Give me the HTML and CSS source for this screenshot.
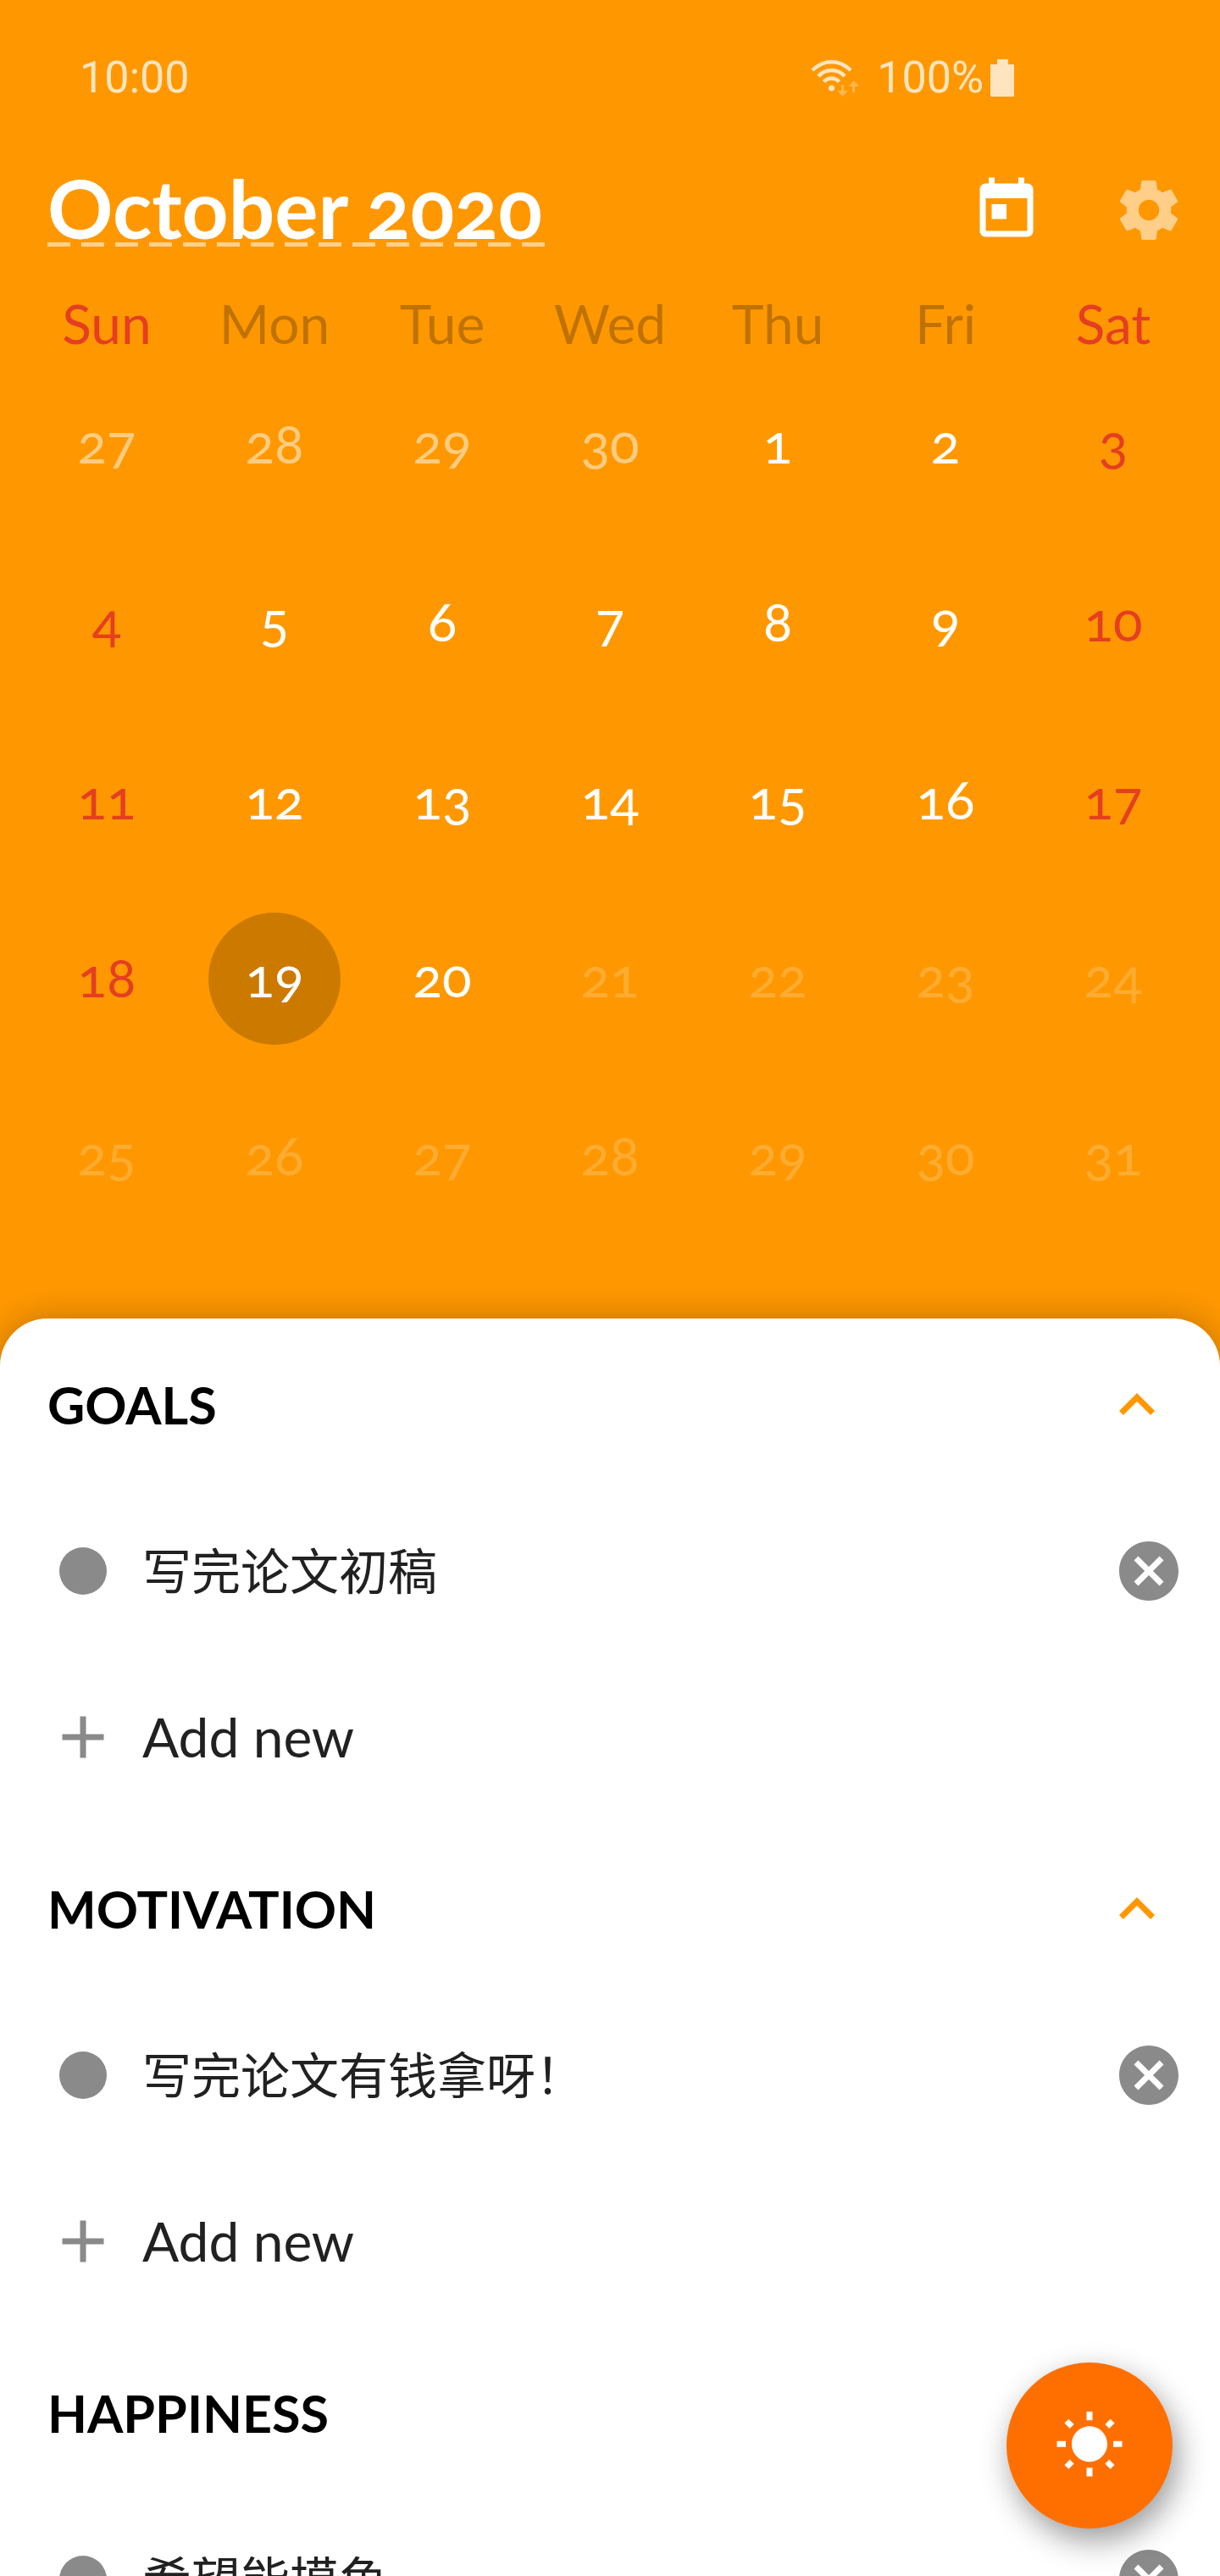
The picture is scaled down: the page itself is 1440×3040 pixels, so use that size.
FILE: index.html
```html
<!DOCTYPE html>
<html lang="en">
<head>
<meta charset="utf-8">
<meta name="viewport" content="width=device-width, initial-scale=1">
<title>October 2020</title>
<link rel="stylesheet" href="styles.css">
</head>
<body>
<svg class="sprite" aria-hidden="true">
  <symbol id="cancel" viewBox="0 0 24 24"><path d="M12 2C6.47 2 2 6.47 2 12s4.47 10 10 10 10-4.47 10-10S17.53 2 12 2zm5 13.59L15.59 17 12 13.41 8.41 17 7 15.59 10.59 12 7 8.41 8.41 7 12 10.59 15.59 7 17 8.41 13.41 12 17 15.59z"/></symbol>
  <symbol id="chevron" viewBox="0 0 24 24"><path d="M12 8l-6 6 1.41 1.41L12 10.83l4.59 4.58L18 14z"/></symbol>
  <symbol id="plus" viewBox="0 0 24 24"><path d="M19 13h-6v6h-2v-6H5v-2h6V5h2v6h6v2z"/></symbol>
  <symbol id="dot" viewBox="0 0 24 24"><circle cx="12" cy="12" r="8"/></symbol>
</svg>
<header class="top">
  <div class="status">
    <span>10:00</span>
    <div class="status-right">
      <svg class="wifi" viewBox="0 0 58 48" aria-hidden="true">
        <g fill="none" stroke="currentColor" stroke-width="4.5">
          <path d="M2 15Q12 5 24.500 5T47 15"/>
          <path d="M9 22Q15 15 24.500 15T40 22"/>
          <path d="M15.500 28.500Q19 24.500 24.500 24.500T33.500 28.500"/>
        </g>
        <circle cx="24.500" cy="36" r="3.500" fill="currentColor"/>
        <path class="traffic" d="M36 32h3v7h5l-6.500 7-6.500-7h5zM49 41h3v-7h5l-6-7-6.500 7h4.500z"/>
      </svg>
      <span>100%</span>
      <svg class="battery" viewBox="0 0 28 44" aria-hidden="true"><path fill="currentColor" d="M8 1q0-1 1-1h11q1 0 1 1v5h6q1 0 1 1v36q0 1-1 1H1q-1 0-1-1V7q0-1 1-1h7z"/></svg>
    </div>
  </div>
  <div class="bar">
    <button class="month">October 2020</button>
    <div class="actions">
      <button class="icon-button" aria-label="Today"><svg class="icon" viewBox="0 0 24 24"><path d="M19 3h-1V1h-2v2H8V1H6v2H5c-1.110 0-1.990.9-1.990 2L3 19c0 1.100.89 2 2 2h14c1.100 0 2-.9 2-2V5c0-1.100-.9-2-2-2zm0 16H5V8h14v11zM7 10h5v5H7z"/></svg></button>
      <button class="icon-button faded" aria-label="Settings"><svg class="icon" viewBox="0 0 24 24"><path d="M19.43 12.98c.04-.32.07-.64.07-.98s-.03-.66-.07-.98l2.110-1.650c.19-.15.24-.42.12-.64l-2-3.460c-.12-.22-.39-.3-.61-.22l-2.490 1c-.52-.4-1.080-.73-1.690-.98l-.38-2.650C14.460 2.180 14.250 2 14 2h-4c-.25 0-.46.18-.49.42l-.38 2.650c-.61.25-1.170.59-1.690.98l-2.490-1c-.23-.09-.49 0-.61.22l-2 3.460c-.13.22-.07.49.12.64l2.110 1.650c-.04.32-.07.65-.07.98s.03.66.07.98l-2.110 1.650c-.19.15-.24.42-.12.64l2 3.460c.12.22.39.3.61.22l2.490-1c.52.4 1.080.73 1.690.98l.38 2.650c.03.24.24.42.49.42h4c.25 0 .46-.18.49-.42l.38-2.650c.61-.25 1.170-.59 1.690-.98l2.490 1c.23.09.49 0 .61-.22l2-3.460c.12-.22.07-.49-.12-.64l-2.110-1.650zM12 15.500c-1.930 0-3.500-1.570-3.500-3.500s1.570-3.500 3.500-3.500 3.500 1.570 3.500 3.500-1.570 3.500-3.500 3.500z"/></svg></button>
    </div>
  </div>
  <div class="calendar">
    <table>
      <thead>
        <tr><th class="weekend">Sun</th><th>Mon</th><th>Tue</th><th>Wed</th><th>Thu</th><th>Fri</th><th class="weekend">Sat</th></tr>
      </thead>
      <tbody>
        <tr><td class="past"><button>27</button></td><td class="past"><button>28</button></td><td class="past"><button>29</button></td><td class="past"><button>30</button></td><td><button>1</button></td><td><button>2</button></td><td class="weekend"><button>3</button></td></tr>
        <tr><td class="weekend"><button>4</button></td><td><button>5</button></td><td><button>6</button></td><td><button>7</button></td><td><button>8</button></td><td><button>9</button></td><td class="weekend"><button>10</button></td></tr>
        <tr><td class="weekend"><button>11</button></td><td><button>12</button></td><td><button>13</button></td><td><button>14</button></td><td><button>15</button></td><td><button>16</button></td><td class="weekend"><button>17</button></td></tr>
        <tr><td class="weekend"><button>18</button></td><td class="selected"><button>19</button></td><td><button>20</button></td><td class="future"><button>21</button></td><td class="future"><button>22</button></td><td class="future"><button>23</button></td><td class="future"><button>24</button></td></tr>
        <tr><td class="future"><button>25</button></td><td class="future"><button>26</button></td><td class="future"><button>27</button></td><td class="future"><button>28</button></td><td class="future"><button>29</button></td><td class="future"><button>30</button></td><td class="future"><button>31</button></td></tr>
      </tbody>
    </table>
  </div>
</header>
<main class="sheet">
  <section>
    <div class="section-head"><h2>GOALS</h2><button class="icon-button accent" aria-label="Collapse goals"><svg class="icon"><use href="#chevron"/></svg></button></div>
    <div class="item"><svg class="icon"><use href="#dot"/></svg><span class="item-text" lang="zh-CN">写完论文初稿</span><button class="icon-button" aria-label="Remove"><svg class="icon"><use href="#cancel"/></svg></button></div>
    <button class="item"><svg class="icon"><use href="#plus"/></svg><span class="item-text">Add new</span></button>
  </section>
  <section>
    <div class="section-head"><h2>MOTIVATION</h2><button class="icon-button accent" aria-label="Collapse motivation"><svg class="icon"><use href="#chevron"/></svg></button></div>
    <div class="item"><svg class="icon"><use href="#dot"/></svg><span class="item-text" lang="zh-CN">写完论文有钱拿呀！</span><button class="icon-button" aria-label="Remove"><svg class="icon"><use href="#cancel"/></svg></button></div>
    <button class="item"><svg class="icon"><use href="#plus"/></svg><span class="item-text">Add new</span></button>
  </section>
  <section>
    <div class="section-head"><h2>HAPPINESS</h2><button class="icon-button accent" aria-label="Collapse happiness"><svg class="icon"><use href="#chevron"/></svg></button></div>
    <div class="item"><svg class="icon"><use href="#dot"/></svg><span class="item-text" lang="zh-CN">希望能摸鱼</span><button class="icon-button" aria-label="Remove"><svg class="icon"><use href="#cancel"/></svg></button></div>
  </section>
</main>
<button class="fab" aria-label="Day theme"><svg class="icon" viewBox="0 0 24 24"><path d="M6.760 4.840l-1.800-1.790-1.410 1.410 1.790 1.790 1.420-1.410zM4 10.500H1v2h3v-2zm9-9.950h-2V3.500h2V.55zm7.450 3.910l-1.410-1.410-1.790 1.790 1.410 1.410 1.790-1.790zm-3.210 13.700l1.790 1.800 1.410-1.410-1.800-1.790-1.400 1.400zM20 10.500v2h3v-2h-3zm-8-5c-3.310 0-6 2.690-6 6s2.690 6 6 6 6-2.690 6-6-2.690-6-6-6zm-1 16.950h2V19.500h-2v2.950zm-7.450-3.910l1.410 1.410 1.790-1.800-1.410-1.410-1.790 1.800z"/></svg></button>
</body>
</html>
```

FILE: styles.css
```css
* {
  box-sizing: border-box;
}

body {
  margin: 0;
  height: 100vh;
  display: flex;
  flex-direction: column;
  overflow: hidden;
  background: #ff9800;
  color: #212121;
  font-family: Lato, "Noto Sans CJK SC", sans-serif;
  font-size: 64px;
  line-height: 76px;
  font-variant-numeric: oldstyle-nums;
}

button {
  margin: 0;
  padding: 0;
  border: 0;
  background: none;
  color: inherit;
  font: inherit;
  text-align: left;
  cursor: pointer;
}

.sprite {
  display: none;
}

.icon {
  display: block;
  flex: none;
  width: 84px;
  height: 84px;
  fill: currentColor;
}

.icon-button {
  flex: none;
}

/* Status bar */
.status {
  display: flex;
  justify-content: space-between;
  align-items: center;
  height: 184px;
  padding: 0 243px 0 94px;
  color: rgba(255, 255, 255, 0.75);
  font-family: Roboto, sans-serif;
  font-size: 52px;
  font-variant-numeric: lining-nums;
}

.status-right {
  display: flex;
  align-items: center;
  gap: 8px;
}

.wifi {
  width: 58px;
  height: 48px;
  margin-right: 12px;
}

.traffic {
  fill: currentColor;
  opacity: 0.4;
}

.battery {
  width: 28px;
  height: 44px;
}

/* Month title and actions */
.bar {
  display: flex;
  justify-content: space-between;
  align-items: center;
  height: 128px;
  padding: 0 42px 0 56px;
  color: #fff;
}

.month {
  padding: 0 16px 6px 0;
  background: repeating-linear-gradient(90deg, rgba(255, 255, 255, 0.55) 0 27px, transparent 27px 40px) bottom / 100% 5px no-repeat;
  font-size: 96px;
  font-weight: 700;
  line-height: 80px;
}

.actions {
  display: flex;
  gap: 84px;
}

.faded {
  opacity: 0.54;
}

/* Calendar */
.calendar {
  padding: 32px 27px 86px;
}

.calendar table {
  width: 100%;
  table-layout: fixed;
  border-collapse: collapse;
}

.calendar th {
  height: 76px;
  padding: 0;
  color: rgba(0, 0, 0, 0.25);
  font-weight: 400;
}

.calendar td {
  height: 210px;
  padding: 0;
  color: #fff;
}

.calendar td button {
  display: block;
  width: 156px;
  height: 156px;
  margin: 0 auto;
  padding-bottom: 4px;
  border-radius: 50%;
  text-align: center;
}

.calendar .weekend {
  color: #e53e22;
}

.calendar .past {
  color: rgba(255, 255, 255, 0.5);
}

.calendar .future {
  color: rgba(255, 255, 255, 0.2);
}

.calendar .selected button {
  background: rgba(0, 0, 0, 0.2);
}

/* Journal sheet */
.sheet {
  flex: 1;
  min-height: 0;
  display: flex;
  flex-direction: column;
  gap: 7px;
  overflow-y: auto;
  scrollbar-width: none;
  padding-top: 4px;
  border-radius: 56px 56px 0 0;
  background: #fff;
  box-shadow: 0 0 40px rgba(0, 0, 0, 0.25);
}

.section-head {
  display: flex;
  justify-content: space-between;
  align-items: center;
  height: 196px;
  padding: 0 56px;
}

.section-head h2 {
  margin: 0;
  color: #000;
  font-size: 61px;
  font-weight: 700;
}

.accent {
  color: #ff9800;
}

.item {
  display: flex;
  align-items: center;
  gap: 28px;
  width: 100%;
  height: 196px;
  padding: 0 42px 0 56px;
  color: #8a8a8a;
}

.item-text {
  flex: 1;
  color: #212121;
}

.item-text:lang(zh) {
  font-size: 58px;
}

.fab {
  position: fixed;
  right: 56px;
  bottom: 56px;
  display: flex;
  align-items: center;
  justify-content: center;
  width: 196px;
  height: 196px;
  border-radius: 50%;
  background: #ff6f00;
  color: #fff;
  box-shadow: 6px 14px 36px rgba(0, 0, 0, 0.4);
}
```
